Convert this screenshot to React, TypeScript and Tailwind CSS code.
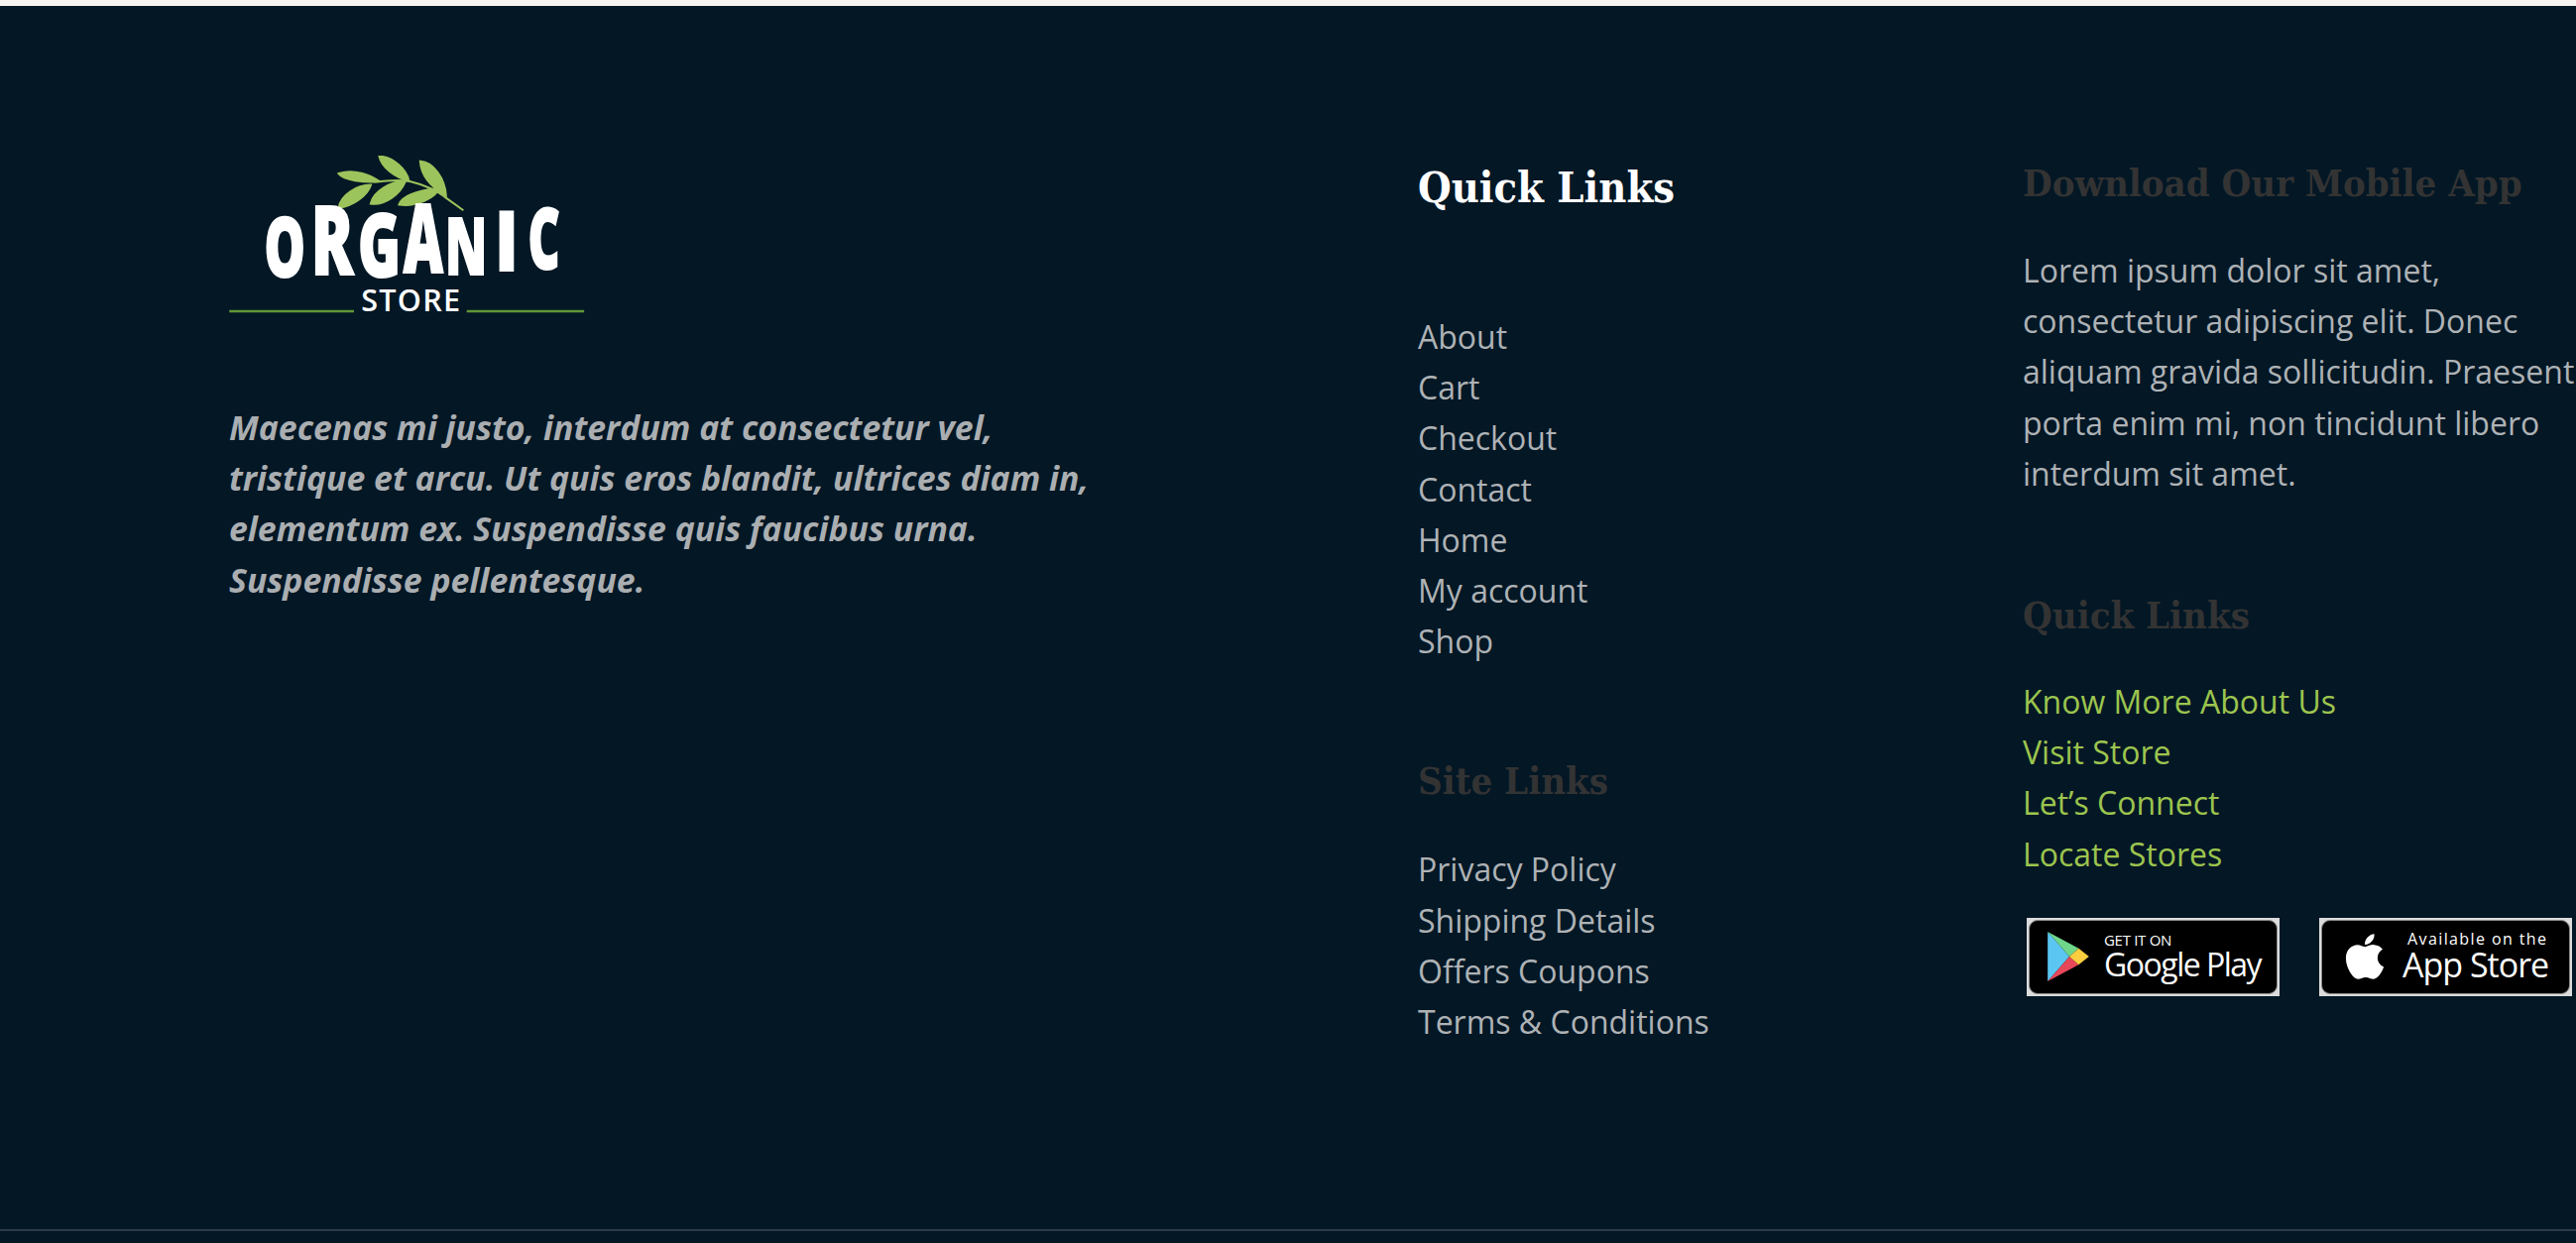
import { FaApple } from "react-icons/fa";

const quickLinks = ["About", "Cart", "Checkout", "Contact", "Home", "My account", "Shop"];
const siteLinks = ["Privacy Policy", "Shipping Details", "Offers Coupons", "Terms & Conditions"];
const storeLinks = ["Know More About Us", "Visit Store", "Let’s Connect", "Locate Stores"];

// letter, x, baseline y, horizontal scale, font size (in the logo's own units)
const logoLetters: [string, number, number, number, number][] = [
  ["O", 198, 447, 0.62, 252],
  ["R", 340, 440, 0.66, 287],
  ["G", 482, 447, 0.66, 265],
  ["A", 620, 435, 0.58, 287],
  ["N", 747, 440, 0.64, 238],
  ["I", 898, 430, 0.8, 252],
  ["C", 998, 423, 0.58, 257],
];

const Logo = () => (
  <svg viewBox="93 80 1100 490" className="block w-[367px] h-[163px]">
    <g fill="#9cc45c" stroke="#9cc45c" strokeWidth="8">
      <path d="M425 135C470 120 520 140 545 158C500 160 440 155 425 135Z" />
      <path d="M425 238C430 200 480 170 520 170C510 200 470 230 425 238Z" />
      <path d="M548 83C590 85 630 125 635 155C595 145 555 115 548 83Z" />
      <path d="M522 225C530 190 580 160 625 158C610 195 565 230 522 225Z" />
      <path d="M672 98C710 100 745 150 748 200C705 175 675 140 672 98Z" />
      <path d="M608 228C620 195 680 185 725 180C720 205 660 235 608 228Z" />
    </g>
    <path d="M530 160C570 155 610 152 640 158C680 168 720 185 745 205L802 246" fill="none" stroke="#9cc45c" strokeWidth="6" />
    {logoLetters.map(([letter, x, y, sx, size]) => (
      <text
        key={letter}
        transform={`translate(${x} ${y}) scale(${sx} 1)`}
        fontSize={size}
        fontWeight="800"
        fontFamily="'Open Sans', sans-serif"
        fill="#ffffff"
        stroke="#ffffff"
        strokeWidth="6"
      >
        {letter}
      </text>
    ))}
    <text x="492" y="553" fontSize="92" fontWeight="600" fontFamily="'Open Sans', sans-serif" fill="#ffffff" textLength="300">
      STORE
    </text>
    <path d="M92 552H470M812 552H1168" stroke="#5f9636" strokeWidth="8" />
  </svg>
);

const Heading = ({ children, white }: { children: string; white?: boolean }) => (
  <h4
    className={`font-['DejaVu_Serif_Condensed','DejaVu_Serif',serif] font-bold leading-[56px] ${white ? "text-white text-[43px]" : "text-[#333333] text-[38px]"}`}
  >
    {children}
  </h4>
);

const LinkList = ({ items, color }: { items: string[]; color: string }) => (
  <ul className={color}>
    {items.map((item) => (
      <li key={item} className="h-[51.2px]">
        {item}
      </li>
    ))}
  </ul>
);

const Badge = ({ children }: { children: React.ReactNode }) => (
  <div className="w-[255px] h-[79px] bg-[#dcdcdc] p-[2px]">
    <div className="w-full h-full bg-black rounded-[9px] border border-[#8a8a8a] flex items-center pl-[17px]">
      {children}
    </div>
  </div>
);

export default function App() {
  return (
    <div className="w-[2598px] h-[1254px] overflow-hidden bg-[#f7f5f2] pt-[6px] font-['Open_Sans',sans-serif]">
      <footer className="h-[1248px] bg-[#031725]">
        <div className="h-[1234px] border-b-2 border-[#2c3a45] box-content -mb-[2px]">
          <div className="flex pl-[231px] text-[32px] leading-[51.2px] font-normal text-[#aeb2b5]">
            {/* Brand */}
            <div className="w-[1199px] shrink-0 pt-[151px]">
              <Logo />
              <p className="mt-[86px] w-[880px] text-[33.8px] font-bold italic text-[#aaaeb1]">
                Maecenas mi justo, interdum at consectetur vel, tristique et arcu. Ut quis eros blandit, ultrices diam in, elementum ex. Suspendisse quis faucibus urna. Suspendisse pellentesque.
              </p>
            </div>

            {/* Links */}
            <div className="w-[610px] shrink-0 pt-[155px]">
              <Heading white>Quick Links</Heading>
              <div className="mt-[97px]">
                <LinkList items={quickLinks} color="" />
              </div>
              <div className="mt-[88px]">
                <Heading>Site Links</Heading>
              </div>
              <div className="mt-[35px]">
                <LinkList items={siteLinks} color="" />
              </div>
            </div>

            {/* App */}
            <div className="w-[570px] shrink-0 pt-[151px]">
              <Heading>Download Our Mobile App</Heading>
              <p className="mt-[34px] w-[570px]">
                Lorem ipsum dolor sit amet, consectetur adipiscing elit. Donec aliquam gravida sollicitudin. Praesent porta enim mi, non tincidunt libero interdum sit amet.
              </p>
              <div className="mt-[90px]">
                <Heading>Quick Links</Heading>
              </div>
              <div className="mt-[33px]">
                <LinkList items={storeLinks} color="text-[#9cc44e]" />
              </div>
              <div className="mt-[39px] flex gap-[40px] pl-[4px] text-white font-normal">
                <Badge>
                  <svg viewBox="0 0 40 48" className="w-[44px] h-[50px] shrink-0">
                    <polygon points="0,0 0,48 21,24" fill="#5bc6f2" />
                    <polygon points="0,0 21,24 30,16" fill="#6fd68a" />
                    <polygon points="0,48 21,24 30,32" fill="#e8475a" />
                    <polygon points="30,16 21,24 30,32 40,24" fill="#fbcd3f" />
                  </svg>
                  <div className="ml-[14px] flex flex-col">
                    <span className="text-[15px] leading-[16px] tracking-[-0.3px]">GET IT ON</span>
                    <span className="text-[32px] leading-[34px] tracking-[-1.5px]">Google Play</span>
                  </div>
                </Badge>
                <Badge>
                  <FaApple className="text-[52px] shrink-0" />
                  <div className="ml-[12px] flex flex-col">
                    <span className="pl-[5px] text-[16px] leading-[17px] tracking-[1.4px]">Available on the</span>
                    <span className="text-[34px] leading-[35px] tracking-[-1px]">App Store</span>
                  </div>
                </Badge>
              </div>
            </div>
          </div>
        </div>
      </footer>
    </div>
  );
}
